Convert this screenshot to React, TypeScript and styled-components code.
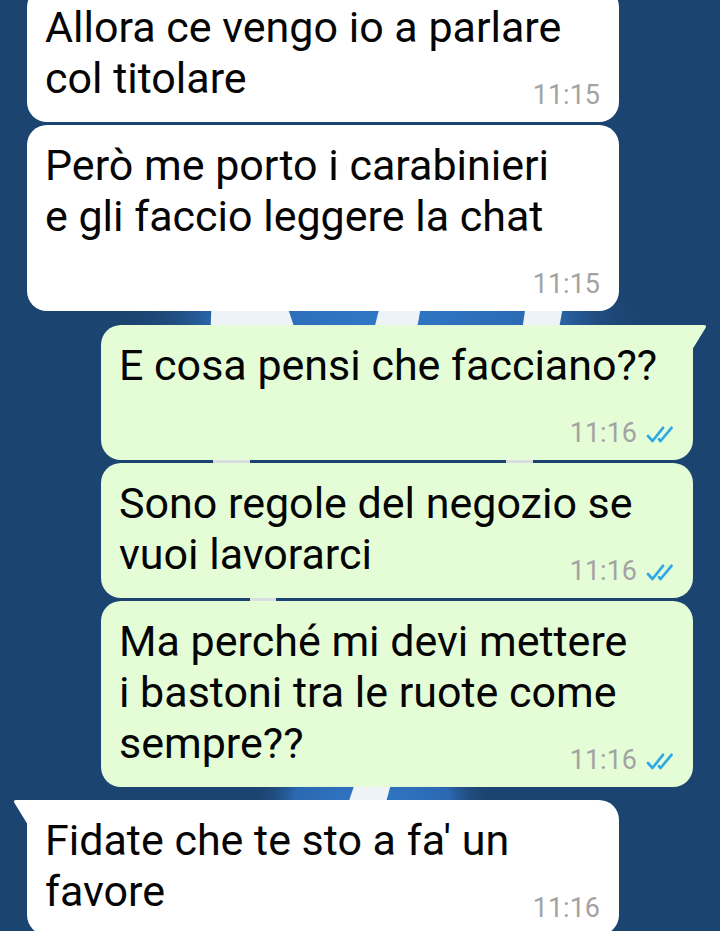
import React from "react";
import styled, { createGlobalStyle } from "styled-components";

const wallpaperSvg = `<svg xmlns='http://www.w3.org/2000/svg' width='720' height='931' viewBox='0 0 720 931'>
<defs>
<radialGradient id='g' cx='0.5' cy='0.5' r='0.5'>
<stop offset='0' stop-color='#3078c8'/>
<stop offset='0.65' stop-color='#2b68b0'/>
<stop offset='1' stop-color='#1c4470' stop-opacity='0'/>
</radialGradient>
</defs>
<ellipse cx='385' cy='320' rx='260' ry='70' fill='url(#g)'/>
<ellipse cx='372' cy='795' rx='120' ry='34' fill='url(#g)'/>
<polygon points='212,290 282,290 300,345 210,345' fill='#eef3f8'/>
<polygon points='384,290 424,290 414,345 370,345' fill='#eef3f8'/>
<polygon points='528,290 566,290 556,345 520,345' fill='#eef3f8'/>
<polygon points='213,450 250,450 250,475 213,475' fill='#d8dde2'/>
<polygon points='506,450 533,450 533,475 506,475' fill='#d8dde2'/>
<polygon points='250,590 276,590 276,610 250,610' fill='#d8dde2'/>
<polygon points='356,780 392,780 384,810 346,810' fill='#eef3f8'/>
</svg>`;

const GlobalStyle = createGlobalStyle`
  html, body {
    margin: 0;
    padding: 0;
    background: #1c4470;
  }
  body {
    font-family: Roboto, "Noto Sans", "Liberation Sans", sans-serif;
    -webkit-font-smoothing: antialiased;
  }
`;

const Page = styled.div`
  width: 720px;
  height: 931px;
  overflow: hidden;
  display: flex;
  flex-direction: column;
  background-color: #1c4470;
  background-image: url("data:image/svg+xml,${encodeURIComponent(wallpaperSvg)}");
  background-repeat: no-repeat;
`;

const Chat = styled.div`
  display: flex;
  flex-direction: column;
  margin-top: -13px;
`;

const Row = styled.div<{ $out?: boolean; $gap: number }>`
  display: flex;
  justify-content: ${(p) => (p.$out ? "flex-end" : "flex-start")};
  padding: 0 27px;
  margin-top: ${(p) => p.$gap}px;
`;

const Bubble = styled.div<{ $out?: boolean; $tail?: boolean }>`
  position: relative;
  display: flow-root;
  box-sizing: border-box;
  width: 592px;
  padding: 15px ${(p) => (p.$out ? 16 : 19)}px 13px 18px;
  border-radius: 20px;
  ${(p) =>
    p.$tail
      ? p.$out
        ? "border-top-right-radius: 0;"
        : "border-top-left-radius: 0;"
      : ""}
  background: ${(p) => (p.$out ? "#e4fdd7" : "#ffffff")};
  color: #050505;
  font-size: 43px;
  line-height: 51px;
  letter-spacing: 0;
`;

const Tail = styled.svg<{ $out?: boolean }>`
  position: absolute;
  top: 0;
  width: 15px;
  height: 25px;
  ${(p) => (p.$out ? "right: -14px;" : "left: -14px; transform: scaleX(-1);")}
`;

const Meta = styled.span`
  float: right;
  display: flex;
  align-items: center;
  gap: 9px;
  height: 28px;
  margin-top: 28px;
  margin-left: 12px;
  font-size: 27px;
  line-height: 28px;
  color: #a3a3a3;
`;

const Ticks = styled.svg`
  width: 31px;
  height: 17px;
  margin-top: 2px;
`;

type Msg = {
  out?: boolean;
  tail?: boolean;
  gap: number;
  lines: string[];
  time: string;
};

const messages: Msg[] = [
  { gap: 0, lines: ["Allora ce vengo io a parlare", "col titolare"], time: "11:15" },
  { gap: 3, lines: ["Però me porto i carabinieri", "e gli faccio leggere la chat"], time: "11:15" },
  { out: true, tail: true, gap: 14, lines: ["E cosa pensi che facciano??"], time: "11:16" },
  { out: true, gap: 3, lines: ["Sono regole del negozio se", "vuoi lavorarci"], time: "11:16" },
  {
    out: true,
    gap: 3,
    lines: ["Ma perché mi devi mettere", "i bastoni tra le ruote come", "sempre??"],
    time: "11:16",
  },
  { tail: true, gap: 13, lines: ["Fidate che te sto a fa' un", "favore"], time: "11:16" },
];

function TailShape({ out, color }: { out?: boolean; color: string }) {
  return (
    <Tail $out={out} viewBox="0 0 15 25">
      <path d="M0 0 H11.5 Q15.5 0 13.2 3.6 L0 25 Z" fill={color} />
    </Tail>
  );
}

function DoubleTick() {
  return (
    <Ticks viewBox="0 0 31 17">
      <g fill="none" stroke="#2ea9e8" strokeWidth="2.7" strokeLinecap="round" strokeLinejoin="round">
        <path d="M2 10 L6.5 15 L17 1.8" />
        <path d="M13 13.3 L14.6 15 L25.5 1.8" />
      </g>
    </Ticks>
  );
}

export default function App() {
  return (
    <>
      <GlobalStyle />
      <Page>
        <Chat>
          {messages.map((m, i) => (
            <Row key={i} $out={m.out} $gap={m.gap}>
              <Bubble $out={m.out} $tail={m.tail}>
                {m.tail && <TailShape out={m.out} color={m.out ? "#e4fdd7" : "#ffffff"} />}
                {m.lines.map((l, j) => (
                  <React.Fragment key={j}>
                    {j > 0 && <br />}
                    {l}
                  </React.Fragment>
                ))}
                <Meta>
                  {m.time}
                  {m.out && <DoubleTick />}
                </Meta>
              </Bubble>
            </Row>
          ))}
        </Chat>
      </Page>
    </>
  );
}
